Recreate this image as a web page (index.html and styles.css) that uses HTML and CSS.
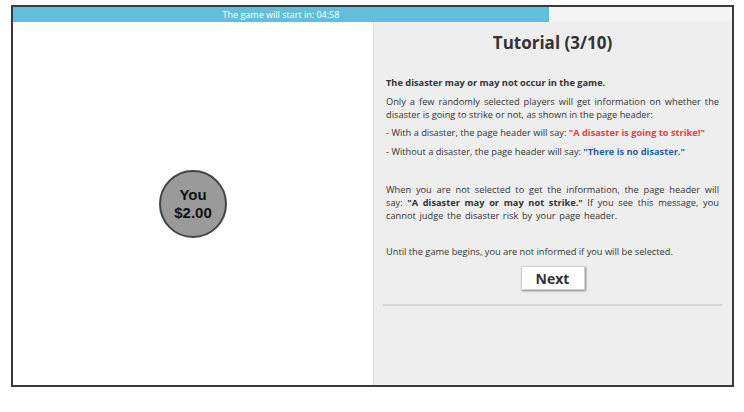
FILE: index.html
```html
<!DOCTYPE html>
<html>
<head>
<meta charset="utf-8">
<link rel="stylesheet" href="styles.css">
</head>
<body>
<div class="frame">
  <div class="progress">
    <div class="progress-fill" style="width: 536px">The game will start in: 04:58</div>
  </div>
  <div class="panels">
    <div class="left-panel">
      <div class="player">
        <span>You</span>
        <span>$2.00</span>
      </div>
    </div>
    <div class="right-panel">
      <h1 class="title">Tutorial (3/10)</h1>
      <p class="lead">The disaster may or may not occur in the game.</p>
      <p>Only a few randomly selected players will get information on whether the disaster is going to strike or not, as shown in the page header:</p>
      <p>- With a disaster, the page header will say: <b class="red">"A disaster is going to strike!"</b></p>
      <p>- Without a disaster, the page header will say: <b class="blue">"There is no disaster."</b></p>
      <p class="note">When you are not selected to get the information, the page header will say: <b>"A disaster may or may not strike."</b> If you see this message, you cannot judge the disaster risk by your page header.</p>
      <p class="until">Until the game begins, you are not informed if you will be selected.</p>
      <div class="actions">
        <button class="next">Next</button>
      </div>
      <hr class="rule">
    </div>
  </div>
</div>
</body>
</html>
```

FILE: styles.css
```css
html, body {
  margin: 0;
  padding: 0;
  background: #ffffff;
}
body {
  font-family: "Open Sans", "Liberation Sans", sans-serif;
  color: #333;
}
.frame {
  margin: 5px 0 0 11px;
  width: 723px;
  height: 382px;
  box-sizing: border-box;
  border: 2px solid #3a3a3a;
  display: flex;
  flex-direction: column;
}
.progress {
  height: 15px;
  background: #f4f4f4;
  flex: none;
}
.progress-fill {
  height: 15px;
  background: #62bfdb;
  color: #fff;
  font-size: 9px;
  line-height: 15px;
  text-align: center;
  white-space: nowrap;
}
.panels {
  flex: 1;
  display: flex;
  min-height: 0;
}
.left-panel {
  width: 360px;
  background: #fff;
  display: flex;
  align-items: center;
  justify-content: center;
}
.player {
  width: 68px;
  height: 68px;
  box-sizing: border-box;
  border-radius: 50%;
  background: #9a9a9a;
  border: 2px solid #444;
  display: flex;
  flex-direction: column;
  align-items: center;
  justify-content: center;
  font-family: "Liberation Sans", Arial, sans-serif;
  font-weight: bold;
  font-size: 15px;
  line-height: 18px;
  color: #111;
}
.right-panel {
  flex: 1;
  background: #eeeeee;
  border-left: 1px solid #dcdcdc;
  padding: 9px 13px 0 12px;
  font-size: 9.25px;
  line-height: 13px;
}
.title {
  margin: 0 0 21px;
  font-size: 17px;
  line-height: 24px;
  font-weight: bold;
  text-align: center;
  color: #333;
}
.right-panel p {
  margin: 0 0 5.5px;
  text-align: justify;
}
.right-panel p.note {
  margin-top: 25px;
  word-spacing: 1.3px;
}
.right-panel p.until {
  margin-top: 23px;
}
.lead {
  font-weight: bold;
}
.red {
  color: #f03c3c;
}
.blue {
  color: #2462a8;
}
.actions {
  display: flex;
  justify-content: center;
  margin-top: 8.5px;
}
.next {
  width: 64px;
  height: 24px;
  box-sizing: border-box;
  background: #fff;
  border: 1px solid #d0d0d0;
  box-shadow: 1px 1px 2px rgba(0, 0, 0, 0.45);
  font-family: "Open Sans", "Liberation Sans", sans-serif;
  font-weight: bold;
  font-size: 14px;
  color: #333;
  padding: 0;
}
.rule {
  margin: 14px -3px 0 -3px;
  border: none;
  height: 1.5px;
  background: #d6d6d6;
}
```
